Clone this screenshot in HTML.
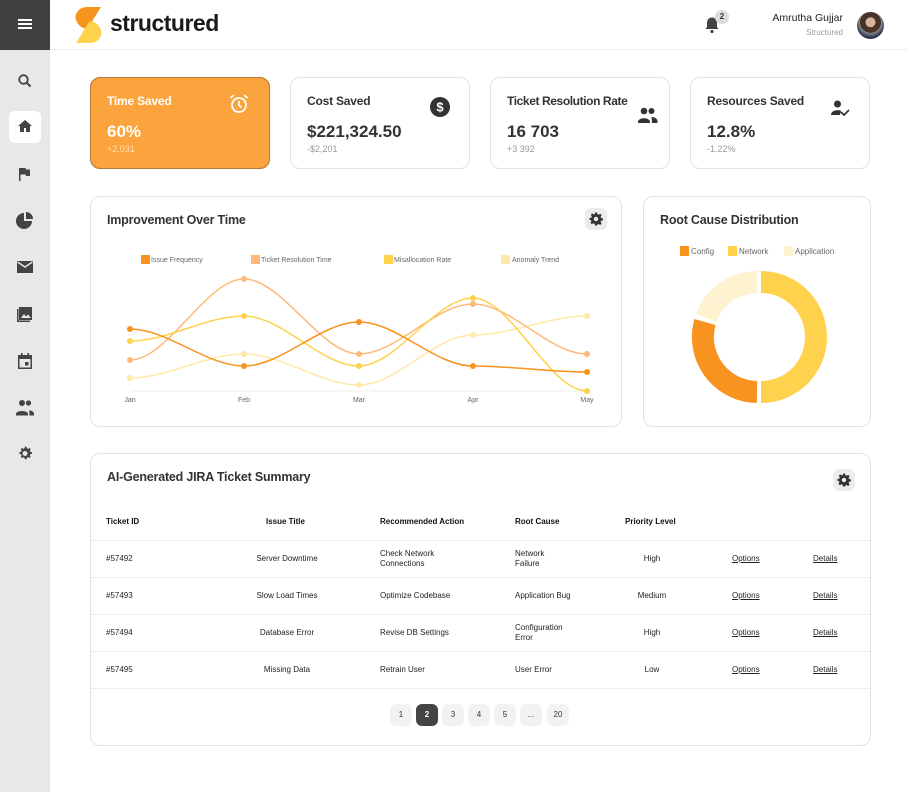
<!DOCTYPE html>
<html><head><meta charset="utf-8"><style>
*{box-sizing:border-box;margin:0;padding:0}
body{width:908px;height:792px;background:#fff;font-family:"Liberation Sans",sans-serif;color:#333;position:relative;overflow:hidden}
.abs{position:absolute}
.side{left:0;top:0;width:50px;height:792px;background:#e8e8e8}
.sidetop{left:0;top:0;width:50px;height:50px;background:#404040}
.hdr{left:50px;top:0;width:858px;height:50px;border-bottom:1px solid #eee;background:#fff}
.card{position:absolute;border:1px solid #e2e2e2;border-radius:10px;background:#fff}
.kt{position:absolute;left:16px;top:16px;font-size:12px;font-weight:bold;color:#333;letter-spacing:-.2px}
.kv{position:absolute;left:16px;top:44px;font-size:17px;font-weight:bold;color:#333}
.ks{position:absolute;left:16px;top:66px;font-size:9px;color:#999}
.ct{position:absolute;left:16px;top:16px;font-size:12.5px;font-weight:bold;color:#333;letter-spacing:-.2px}
.gear{position:absolute;width:22px;height:22px;border-radius:6px;background:#ececec}
.td{position:absolute;font-size:8px;color:#222;line-height:10px}
.th{position:absolute;font-size:8px;font-weight:bold;color:#111}
.line{position:absolute;left:0;width:779px;height:1px;background:#eee}
.pg{position:absolute;top:704px;width:22px;height:22px;border-radius:6px;background:#f2f2f2;font-size:8px;text-align:center;line-height:22px;color:#333}
u{text-decoration:underline}
</style></head><body>
<div class="abs side"></div>
<div class="abs sidetop"></div>
<div class="abs" style="left:18px;top:19px;width:14px;height:2px;background:#fff;box-shadow:0 4px 0 #fff,0 8px 0 #fff"></div>
<div class="abs" style="left:9px;top:111px;width:32px;height:32px;background:#fff;border-radius:6px"></div>
<svg class="abs" style="left:0;top:0" width="50" height="792" fill="#444">
<circle cx="23.5" cy="79.5" r="4.3" fill="none" stroke="#444" stroke-width="1.8"/><path d="M26.5 82.5l4 4" stroke="#444" stroke-width="2"/>
<path d="M25 120l-7 6h2v6h4v-4h2v4h4v-6h2z"/>
<path d="M19 168h1.5v13H19zM20.5 168h5l.5 1.5h4v6.5h-4l-.5-1.5h-5z"/>
<path d="M24 213a8 8 0 1 0 8 8h-8z"/><path d="M26 212v7h7a7 7 0 0 0-7-7z"/>
<path d="M17 261h16v12H17z"/><path d="M17.5 262l7.5 5 7.5-5" stroke="#e8e8e8" stroke-width="1.4" fill="none"/>
<path d="M19 307h13v13H19z"/><path d="M17 309v13h13v-1.5H18.5V309z"/><path d="M21 318l3-4 2 2.5 2-2 3 3.5z" fill="#e8e8e8"/>
<path d="M18 355h14v14H18z"/><path d="M19.5 359h11v8.5h-11z" fill="#e8e8e8"/><rect x="21" y="353" width="1.6" height="3"/><rect x="27.4" y="353" width="1.6" height="3"/><rect x="25" y="362" width="3.5" height="3.5"/>
<circle cx="22" cy="403" r="3"/><circle cx="28.5" cy="403" r="2.6"/><path d="M16 414c0-4 12-4 12 0v1.5H16z"/><path d="M29 410.5c3 0 5 1.2 5 3.5v1.5h-4.5c0-2-.2-3.6-.5-5z"/>
<path d="M25 446.5l1.5.2.4 1.6 1.3.6 1.4-.9 1.1 1.1-.9 1.4.6 1.3 1.6.4v1.6l-1.6.4-.6 1.3.9 1.4-1.1 1.1-1.4-.9-1.3.6-.4 1.6h-1.6l-.4-1.6-1.3-.6-1.4.9-1.1-1.1.9-1.4-.6-1.3-1.6-.4v-1.6l1.6-.4.6-1.3-.9-1.4 1.1-1.1 1.4.9 1.3-.6.4-1.6zM25 451a2.5 2.5 0 1 0 0 5 2.5 2.5 0 1 0 0-5z"/>
</svg>
<div class="abs hdr"></div>
<svg class="abs" style="left:73px;top:6px" width="30" height="38"><path d="M3 14C1 8 6 1 14 1h14L15 22C11 24 5 20 3 14z" fill="#f7941d"/><path d="M28 24c2 6-3 13-11 13H3L16 16c4-2 10 2 12 8z" fill="#ffd24d"/></svg>
<div class="abs" style="left:110px;top:10px;font-size:23px;font-weight:bold;color:#1a1a1a;letter-spacing:-.5px">structured</div>
<svg class="abs" style="left:704px;top:16px" width="16" height="18" fill="#444"><path d="M8 1.5c3 0 5 2.3 5 5.5v4l1.6 2H1.4L3 11V7c0-3.2 2-5.5 5-5.5z"/><circle cx="8" cy="15.5" r="1.6"/></svg>
<div class="abs" style="left:715px;top:10px;width:14px;height:14px;border-radius:7px;background:#ddd;font-size:8px;text-align:center;line-height:14px;font-weight:bold">2</div>
<div class="abs" style="right:65px;top:12px;font-size:10.5px;color:#222">Amrutha Gujjar</div>
<div class="abs" style="right:65px;top:28px;font-size:8px;color:#999">Structured</div>
<div class="abs" style="left:857px;top:12px;width:27px;height:27px;border-radius:50%;background:radial-gradient(circle at 50% 38%,#d9b49c 0 22%,#4a3228 24% 48%,#8a8a8a 50%,#2a3450 70%);"></div>

<div class="card" style="left:90px;top:77px;width:180px;height:92px;background:#fba33c;border-color:#b07a3a"><div class="kt" style="color:#fff">Time Saved</div><div class="kv" style="color:#fff">60%</div><div class="ks" style="color:#ffe0b8">+2.031</div>
<svg class="abs" style="left:137px;top:15px" width="22" height="22" fill="none" stroke="#fff" stroke-width="1.8"><circle cx="11" cy="12" r="7"/><path d="M11 8v4.5l2.5 2M2.5 5l3.5-3M19.5 5l-3.5-3"/></svg></div>
<div class="card" style="left:290px;top:77px;width:180px;height:92px"><div class="kt">Cost Saved</div><div class="kv">$221,324.50</div><div class="ks">-$2,201</div>
<svg class="abs" style="left:138px;top:18px" width="22" height="22"><circle cx="11" cy="11" r="10" fill="#333"/><text x="11" y="15.5" font-size="13" font-weight="bold" fill="#fff" text-anchor="middle" font-family="Liberation Sans">$</text></svg></div>
<div class="card" style="left:490px;top:77px;width:180px;height:92px"><div class="kt" style="letter-spacing:-.4px">Ticket Resolution Rate</div><div class="kv">16 703</div><div class="ks">+3 392</div>
<svg class="abs" style="left:146px;top:28px" width="22" height="18" fill="#333"><circle cx="7" cy="5" r="3.3"/><circle cx="14.5" cy="5" r="3"/><path d="M1 16c0-5 12-5 12 0v1H1zM14.5 11c3 0 6 1.5 6 4v2H15c0-2.5-.3-4.5-.5-6z"/></svg></div>
<div class="card" style="left:690px;top:77px;width:180px;height:92px"><div class="kt">Resources Saved</div><div class="kv">12.8%</div><div class="ks">-1.22%</div>
<svg class="abs" style="left:139px;top:21px" width="22" height="20" fill="#333"><circle cx="7.5" cy="5" r="3.5"/><path d="M1 16c0-4.5 6-5.5 10-4.5l-1 4.5z"/><path d="M11 13l3 3 5-5" stroke="#333" stroke-width="1.8" fill="none"/></svg></div>

<div class="card" style="left:90px;top:196px;width:532px;height:231px"><div class="ct">Improvement Over Time</div>
<div class="gear" style="left:494px;top:11px"></div>
<svg class="abs" style="left:498px;top:15px" width="14" height="14" viewBox="0 0 14 14" fill="#333"><path d="M6 .5h2l.4 1.8 1.2.5 1.6-1 1.4 1.4-1 1.6.5 1.2 1.8.4v2l-1.8.4-.5 1.2 1 1.6-1.4 1.4-1.6-1-1.2.5L8 13.5H6l-.4-1.8-1.2-.5-1.6 1-1.4-1.4 1-1.6-.5-1.2L.5 8V6l1.8-.4.5-1.2-1-1.6 1.4-1.4 1.6 1 1.2-.5zM7 4.8a2.2 2.2 0 1 0 0 4.4 2.2 2.2 0 1 0 0-4.4z"/></svg>
</div>
<svg class="abs" style="left:0;top:0" width="908" height="792" font-family="Liberation Sans" font-size="7" fill="#666">
<rect x="141" y="255" width="9" height="9" fill="#f7931e"/><text x="151" y="262">Issue Frequency</text>
<rect x="251" y="255" width="9" height="9" fill="#fdb97a"/><text x="261" y="262">Ticket Resolution Time</text>
<rect x="384" y="255" width="9" height="9" fill="#ffd24d"/><text x="394" y="262">Misallocation Rate</text>
<rect x="501" y="255" width="9" height="9" fill="#ffe9a8"/><text x="512" y="262">Anomaly Trend</text>
<line x1="130" y1="391" x2="587" y2="391" stroke="#eee"/>
<text x="130" y="402" text-anchor="middle">Jan</text><text x="244" y="402" text-anchor="middle">Feb</text><text x="359" y="402" text-anchor="middle">Mar</text><text x="473" y="402" text-anchor="middle">Apr</text><text x="587" y="402" text-anchor="middle">May</text>
<g fill="none" stroke-width="1.5">
<path d="M130 378C168 378 206 354 244 354S321 385 359 385 435 335 473 335 549 316 587 316" stroke="#ffe9a8"/>
<path d="M130 360C168 360 206 279 244 279S321 354 359 354 435 304 473 304 549 354 587 354" stroke="#fdb97a"/>
<path d="M130 341C168 341 206 316 244 316S321 366 359 366 435 298 473 298 549 391 587 391" stroke="#ffd24d"/>
<path d="M130 329C168 329 206 366 244 366S321 322 359 322 435 366 473 366 549 372 587 372" stroke="#f7931e"/>
</g>
<g fill="#ffe9a8"><circle cx="130" cy="378" r="3"/><circle cx="244" cy="354" r="3"/><circle cx="359" cy="385" r="3"/><circle cx="473" cy="335" r="3"/><circle cx="587" cy="316" r="3"/></g>
<g fill="#fdb97a"><circle cx="130" cy="360" r="3"/><circle cx="244" cy="279" r="3"/><circle cx="359" cy="354" r="3"/><circle cx="473" cy="304" r="3"/><circle cx="587" cy="354" r="3"/></g>
<g fill="#ffd24d"><circle cx="130" cy="341" r="3"/><circle cx="244" cy="316" r="3"/><circle cx="359" cy="366" r="3"/><circle cx="473" cy="298" r="3"/><circle cx="587" cy="391" r="3"/></g>
<g fill="#f7931e"><circle cx="130" cy="329" r="3"/><circle cx="244" cy="366" r="3"/><circle cx="359" cy="322" r="3"/><circle cx="473" cy="366" r="3"/><circle cx="587" cy="372" r="3"/></g>
</svg>

<div class="card" style="left:643px;top:196px;width:228px;height:231px"><div class="ct">Root Cause Distribution</div></div>
<svg class="abs" style="left:0;top:0" width="908" height="792" font-family="Liberation Sans" font-size="8" fill="#666">
<rect x="680" y="246" width="9" height="10" fill="#f7931e"/><text x="691" y="254">Config</text>
<rect x="728" y="246" width="9" height="10" fill="#ffd24d"/><text x="739" y="254">Network</text>
<rect x="784" y="246" width="9" height="10" fill="#fff2d0"/><text x="795" y="254">Application</text>
<g fill="none" stroke-width="22">
<path d="M761 282A55 55 0 0 1 761 392" stroke="#ffd24d"/>
<path d="M757 392A55 55 0 0 1 705 322" stroke="#f7931e"/>
<path d="M706 318A55 55 0 0 1 757 282" stroke="#fff2d0"/>
</g>
</svg>

<div class="card" style="left:90px;top:453px;width:781px;height:293px"><div class="ct">AI-Generated JIRA Ticket Summary</div>
<div class="gear" style="left:742px;top:15px"></div>
<svg class="abs" style="left:746px;top:19px" width="14" height="14" viewBox="0 0 14 14" fill="#333"><path d="M6 .5h2l.4 1.8 1.2.5 1.6-1 1.4 1.4-1 1.6.5 1.2 1.8.4v2l-1.8.4-.5 1.2 1 1.6-1.4 1.4-1.6-1-1.2.5L8 13.5H6l-.4-1.8-1.2-.5-1.6 1-1.4-1.4 1-1.6-.5-1.2L.5 8V6l1.8-.4.5-1.2-1-1.6 1.4-1.4 1.6 1 1.2-.5zM7 4.8a2.2 2.2 0 1 0 0 4.4 2.2 2.2 0 1 0 0-4.4z"/></svg>
<div class="line" style="top:86px"></div><div class="line" style="top:123px"></div><div class="line" style="top:160px"></div><div class="line" style="top:197px"></div><div class="line" style="top:234px"></div>
</div>
<div class="th" style="left:106px;top:517px">Ticket ID</div>
<div class="th" style="left:266px;top:517px">Issue Title</div>
<div class="th" style="left:380px;top:517px">Recommended Action</div>
<div class="th" style="left:515px;top:517px">Root Cause</div>
<div class="th" style="left:625px;top:517px">Priority Level</div>

<div class="td" style="left:106px;top:554px">#57492</div><div class="td" style="left:227px;width:120px;text-align:center;top:554px">Server Downtime</div><div class="td" style="left:380px;top:549px">Check Network<br>Connections</div><div class="td" style="left:515px;top:549px">Network<br>Failure</div><div class="td" style="left:612px;width:80px;text-align:center;top:554px">High</div><div class="td" style="left:732px;top:554px"><u>Options</u></div><div class="td" style="left:813px;top:554px"><u>Details</u></div>
<div class="td" style="left:106px;top:591px">#57493</div><div class="td" style="left:227px;width:120px;text-align:center;top:591px">Slow Load Times</div><div class="td" style="left:380px;top:591px">Optimize Codebase</div><div class="td" style="left:515px;top:591px">Application Bug</div><div class="td" style="left:612px;width:80px;text-align:center;top:591px">Medium</div><div class="td" style="left:732px;top:591px"><u>Options</u></div><div class="td" style="left:813px;top:591px"><u>Details</u></div>
<div class="td" style="left:106px;top:628px">#57494</div><div class="td" style="left:227px;width:120px;text-align:center;top:628px">Database Error</div><div class="td" style="left:380px;top:628px">Revise DB Settings</div><div class="td" style="left:515px;top:623px">Configuration<br>Error</div><div class="td" style="left:612px;width:80px;text-align:center;top:628px">High</div><div class="td" style="left:732px;top:628px"><u>Options</u></div><div class="td" style="left:813px;top:628px"><u>Details</u></div>
<div class="td" style="left:106px;top:665px">#57495</div><div class="td" style="left:227px;width:120px;text-align:center;top:665px">Missing Data</div><div class="td" style="left:380px;top:665px">Retrain User</div><div class="td" style="left:515px;top:665px">User Error</div><div class="td" style="left:612px;width:80px;text-align:center;top:665px">Low</div><div class="td" style="left:732px;top:665px"><u>Options</u></div><div class="td" style="left:813px;top:665px"><u>Details</u></div>

<div class="pg" style="left:390px">1</div><div class="pg" style="left:416px;background:#444;color:#fff;font-weight:bold">2</div><div class="pg" style="left:442px">3</div><div class="pg" style="left:468px">4</div><div class="pg" style="left:494px">5</div><div class="pg" style="left:520px">...</div><div class="pg" style="left:547px">20</div>
</body></html>
